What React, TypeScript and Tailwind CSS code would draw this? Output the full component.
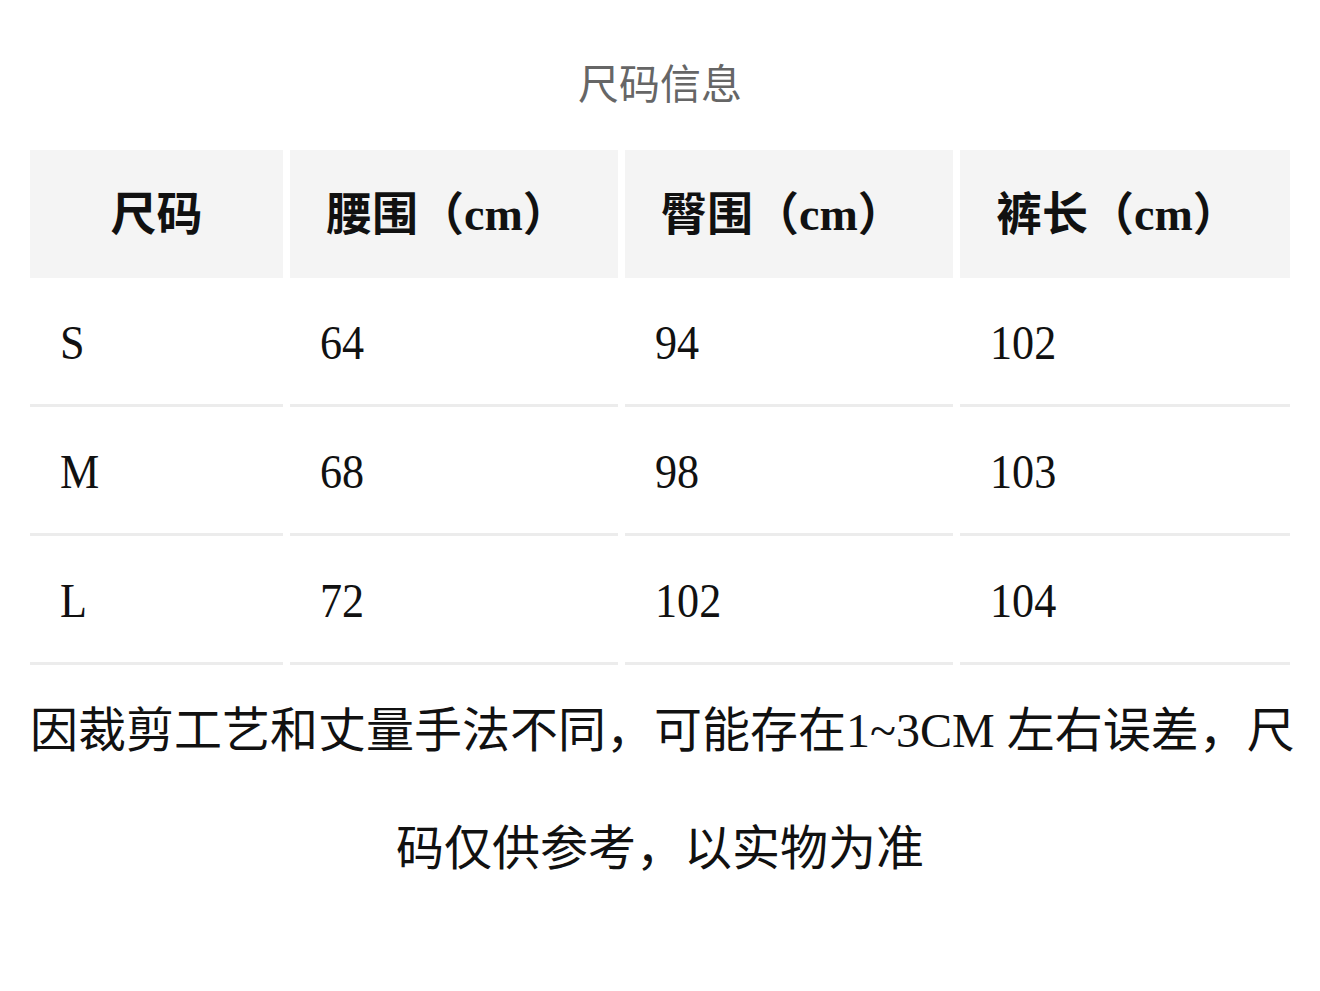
const font = { fontFamily: '"Liberation Serif", "Noto Sans CJK SC", serif' };

const headers = ["腰围（cm）", "臀围（cm）", "裤长（cm）"];

const rows = [
  ["S", "64", "94", "102"],
  ["M", "68", "98", "103"],
  ["L", "72", "102", "104"],
];

export default function App() {
  return (
    <div className="min-h-[991px] w-[1320px] bg-white text-[#111]" style={font}>
      {/* Title */}
      <div className="pt-[57px] text-center text-[41px] leading-[48px] text-[#666]" style={{ fontFamily: '"Noto Sans CJK SC", sans-serif' }}>
        尺码信息
      </div>

      {/* Table */}
      <div className="mx-[30px] mt-[45px] grid grid-cols-[253px_328px_328px_330px] gap-x-[7px]">
        <div className="flex h-[128px] items-center justify-center bg-[#f4f4f4] text-[46px] font-bold">
          尺码
        </div>
        {headers.map((h) => (
          <div key={h} className="flex h-[128px] items-center bg-[#f4f4f4] pl-[36px] text-[46px] font-bold whitespace-nowrap">
            {h}
          </div>
        ))}

        {rows.map((r) =>
          r.map((v, i) => (
            <div
              key={r[0] + i}
              className="flex h-[129px] items-center border-b-[3px] border-[#ececec] pl-[30px] pt-[4px] text-[48px]"
            >
              <span className="origin-left scale-x-[0.92]">{v}</span>
            </div>
          ))
        )}
      </div>

      {/* Note */}
      <p className="mx-[30px] pt-[7px] text-center text-[48px] leading-[118px] whitespace-nowrap">
        因裁剪工艺和丈量手法不同，可能存在1~3CM 左右误差，尺
        <br />
        码仅供参考，以实物为准
      </p>
    </div>
  );
}
